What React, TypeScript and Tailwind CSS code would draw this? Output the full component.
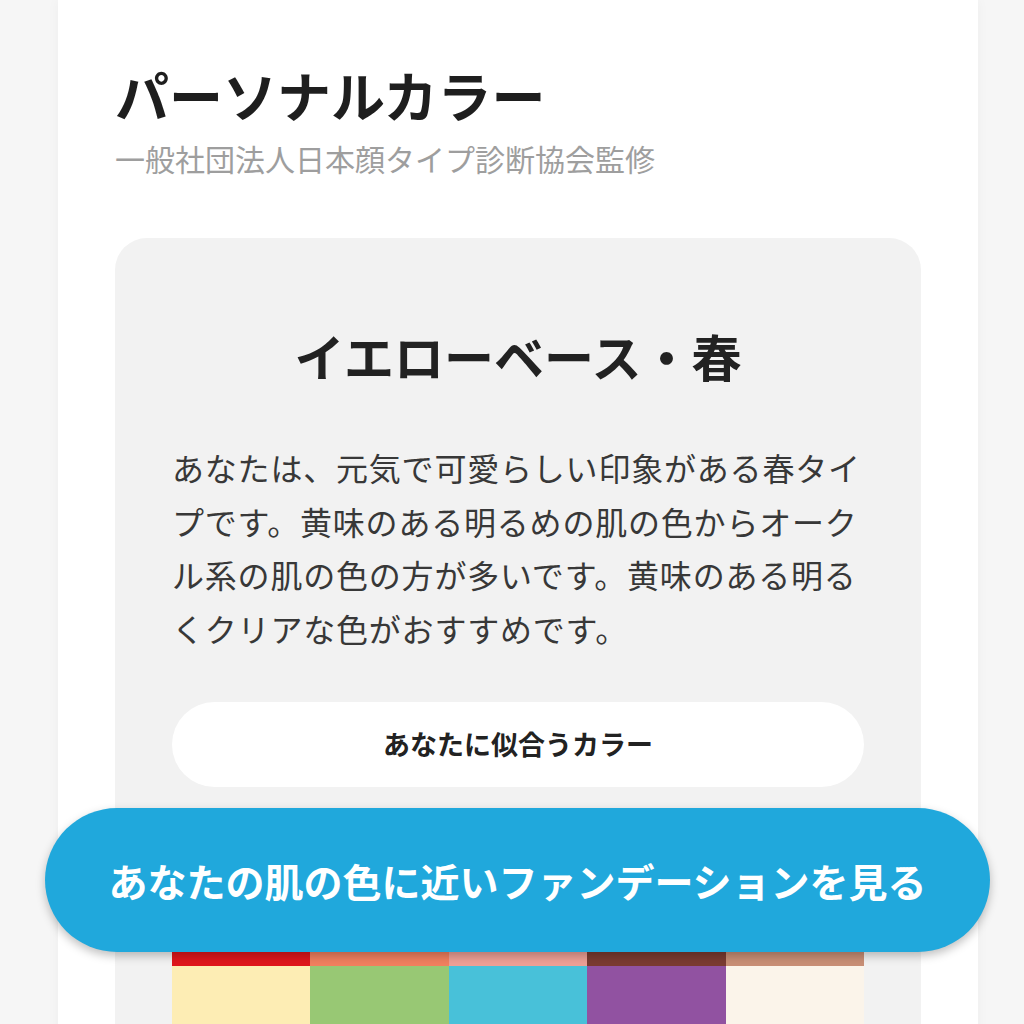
const font = { fontFamily: '"Noto Sans CJK JP", "Noto Sans", sans-serif' };

const topRow = ["#e0161b", "#f2805f", "#eea096", "#7b3b31", "#c98f76"];
const bottomRow = ["#fdedb4", "#98c874", "#48c1d9", "#9152a1", "#fbf4ea"];

export default function App() {
  return (
    <div className="relative h-[1024px] overflow-hidden bg-[#f6f6f6]" style={font}>
      <div className="ml-[58px] w-[920px] bg-white px-[57px] pt-[62px] shadow-[0_0_12px_rgba(0,0,0,0.04)]">
        <h1 className="text-[54px] font-bold leading-[66px] text-[#1e1e1e]">パーソナルカラー</h1>
        <p className="mt-[10px] text-[30px] leading-[40px] text-[#9e9e9e]">
          一般社団法人日本顔タイプ診断協会監修
        </p>

        <div className="mt-[60px] rounded-[32px] bg-[#f2f2f2] px-[57px] pt-[87px]">
          <h2 className="text-center text-[50px] font-bold leading-[60px] text-[#222]">
            イエローベース・春
          </h2>
          <p className="mt-[56px] text-[32px] leading-[53.5px] tracking-[0.8px] text-[#383838]">
            あなたは、元気で可愛らしい印象がある春タイ
            <br />
            プです。黄味のある明るめの肌の色からオーク
            <br />
            ル系の肌の色の方が多いです。黄味のある明る
            <br />
            くクリアな色がおすすめです。
          </p>
          <div className="mt-[47px] flex h-[85px] items-center justify-center rounded-full bg-white text-[27px] font-bold text-[#222]">
            あなたに似合うカラー
          </div>

          <div className="mt-[43px] grid grid-cols-5">
            {topRow.map((c) => (
              <div key={c} className="h-[136px]" style={{ backgroundColor: c }} />
            ))}
            {bottomRow.map((c) => (
              <div key={c} className="h-[136px]" style={{ backgroundColor: c }} />
            ))}
          </div>
        </div>
      </div>

      <button
        type="button"
        className="absolute left-[45px] top-[808px] flex h-[144px] w-[945px] items-center justify-center rounded-full bg-[#20a8dc] text-[39px] font-bold text-white shadow-[0_4px_10px_rgba(0,0,0,0.25)]"
      >
        あなたの肌の色に近いファンデーションを見る
      </button>
    </div>
  );
}
